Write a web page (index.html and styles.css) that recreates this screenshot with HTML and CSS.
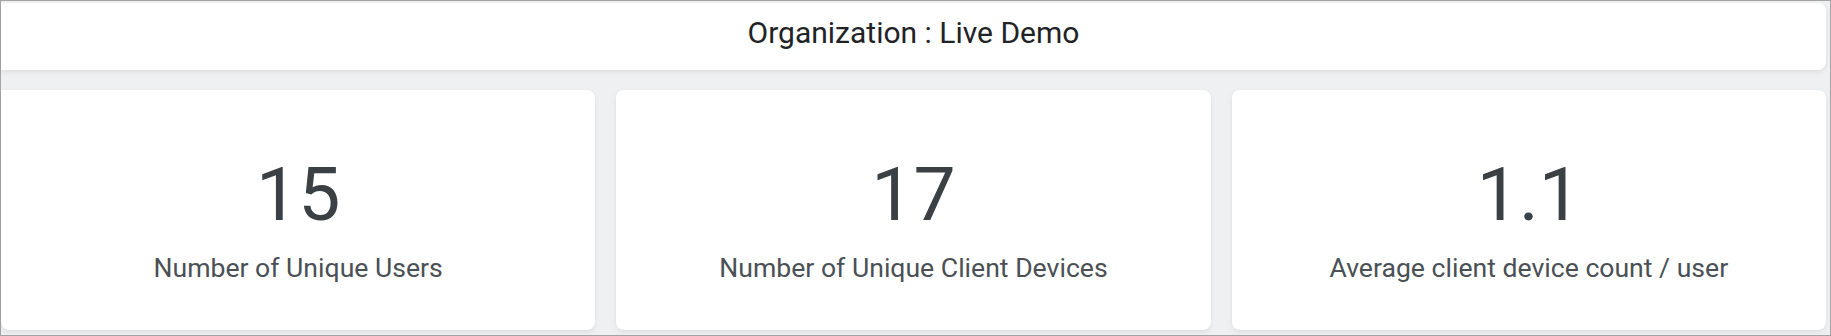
FILE: index.html
```html
<!DOCTYPE html>
<html lang="en">
<head>
    <meta charset="UTF-8">
    <meta name="viewport" content="width=device-width, initial-scale=1.0">
    <title>Organization Overview</title>
    <link rel="stylesheet" href="styles.css">
</head>
<body>

    <div class="frame">
        <div class="org-header">Organization : Live Demo</div>

        <div class="stats">
            <div class="stat-card">
                <div class="stat-value">15</div>
                <div class="stat-label">Number of Unique Users</div>
            </div>
            <div class="stat-card">
                <div class="stat-value">17</div>
                <div class="stat-label">Number of Unique Client Devices</div>
            </div>
            <div class="stat-card">
                <div class="stat-value">1.1</div>
                <div class="stat-label">Average client device count / user</div>
            </div>
        </div>
    </div>

</body>
</html>
```

FILE: styles.css
```css
html, body {
    margin: 0;
    padding: 0;
}

body {
    font-family: Roboto, "Liberation Sans", sans-serif;
    background-color: #fff;
}

.frame {
    box-sizing: border-box;
    width: 1831px;
    height: 336px;
    border: 1px solid #a4a4a4;
    background-color: #eef0f2;
    padding: 2px 4px 4px 0;
    display: flex;
    flex-direction: column;
    gap: 20px;
}

.org-header {
    box-sizing: border-box;
    height: 67px;
    padding-top: 15px;
    background-color: #fff;
    border-radius: 0 8px 8px 0;
    box-shadow: 0 2px 5px rgba(0, 0, 0, 0.08);
    text-align: center;
    font-size: 30px;
    line-height: 30px;
    color: #1f2326;
}

.stats {
    display: grid;
    grid-template-columns: repeat(3, 1fr);
    gap: 21px;
}

.stat-card {
    box-sizing: border-box;
    height: 240px;
    padding-top: 67px;
    background-color: #fff;
    border-radius: 8px;
    box-shadow: 0 2px 5px rgba(0, 0, 0, 0.08);
    text-align: center;
}

.stat-card:first-child {
    border-top-left-radius: 0;
}

.stat-value {
    font-size: 75px;
    line-height: 75px;
    color: #3b4045;
}

.stat-label {
    margin-top: 23px;
    font-size: 26.6px;
    line-height: 26px;
    color: #4a5055;
}
```
